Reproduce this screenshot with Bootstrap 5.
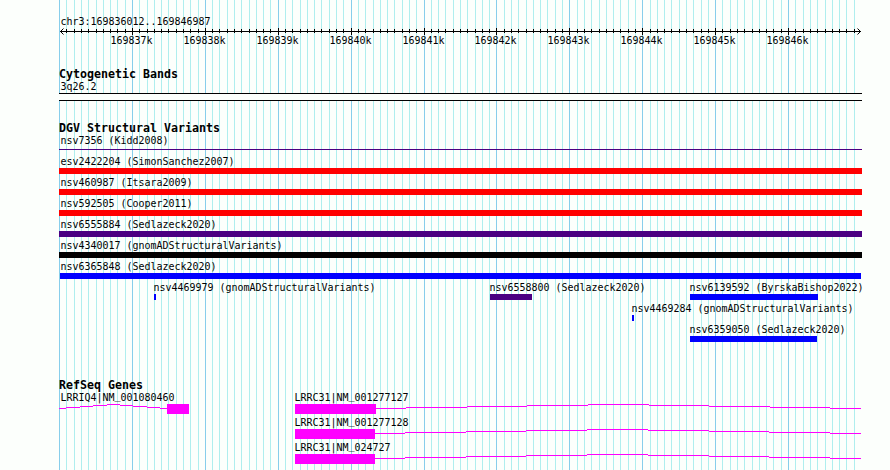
<!DOCTYPE html>
<html lang="en">
<head>
<meta charset="utf-8">
<title>chr3:169836012..169846987</title>
<link href="https://cdn.jsdelivr.net/npm/bootstrap@5.3.0/dist/css/bootstrap.min.css" rel="stylesheet">
<style>
body{background:#fcfffc;color:#000;font-family:"DejaVu Sans Mono","Liberation Mono",monospace}
.browser{width:890px;height:470px;padding:15px 0 0 59px}
.gridlines{z-index:0}
.tracks{z-index:1;width:803px}
.lbl{display:block;width:max-content;height:13px;font-size:11px;line-height:13px;white-space:pre;margin-left:1px;transform:translateX(.5px) scaleX(.906);transform-origin:0 0}
.underscore{vertical-align:2px;line-height:0}
.heading{height:13px;margin:20px 0 0;padding-top:1px;font-size:11.63px;line-height:12px;font-weight:700;white-space:pre}
.heading.genes{margin-top:34px}
.axis{height:6px;overflow:visible}
.scale{height:13px}
.scale .lbl{margin-left:-.5px}
.band{height:8px;background:#fcfffc;border:solid #000;border-width:1px 0}
.variant{height:21px}
.gene{height:25px}
.feature .lbl{margin-left:-1px}
.feature.edge .lbl{margin-left:1px}
.feature.inset .lbl{margin-left:0}
.bar{height:6px}
.bar.thin{height:1px;margin-top:2px}
.c-red{background:#f00}.c-indigo{background:#4b0082}.c-black{background:#000}.c-blue{background:#00f}
.genebar{height:10px;overflow:visible}
</style>
<script src="https://cdn.jsdelivr.net/npm/bootstrap@5.3.0/dist/js/bootstrap.bundle.min.js"></script>
</head>
<body class="m-0 overflow-hidden">
<main class="browser position-relative overflow-hidden">
  <svg class="gridlines position-absolute top-0 start-0" width="890" height="470" shape-rendering="crispEdges" aria-hidden="true"><path id="minor" fill="#afeeee"/><path id="major" fill="#87ceeb"/></svg>
  <div class="tracks position-relative">
    <span class="lbl">chr3:169836012..169846987</span>
    <svg class="axis d-block" width="803" height="6" aria-hidden="true"><path id="ticks" shape-rendering="crispEdges"/><path d="M4.5 .5L1.5 3.5L4.5 6.5M798.5 .5L801.5 3.5L798.5 6.5" fill="none" stroke="#000"/></svg>
    <div class="scale d-flex" id="scale"></div>
    <h2 class="heading">Cytogenetic Bands</h2>
    <span class="lbl">3q26.2</span>
    <div class="band"></div>
    <h2 class="heading">DGV Structural Variants</h2>
    <div id="variants"></div>
    <h2 class="heading genes">RefSeq Genes</h2>
    <div id="genes"></div>
  </div>
</main>
<script>
const LEFT = 59, gridX = k => Math.floor(59.55 + 7.29 * k);
let minor = '', major = '', ticks = 'M1 3H802V4H1Z';
for (let k = 0; k < 110; k++) {
  const x = gridX(k), t = x - LEFT;
  if (k % 10) { minor += `M${x} 0h1v470h-1z`; ticks += `M${t} 1h1v4h-1z`; }
  else { major += `M${x} 0h1v470h-1z`; if (k) ticks += `M${t} 0h1v7h-1z`; }
}
document.getElementById('minor').setAttribute('d', minor);
document.getElementById('major').setAttribute('d', major);
document.getElementById('ticks').setAttribute('d', ticks);

let scale = '';
for (let i = 1; i <= 10; i++) {
  const w = gridX(i * 10 + 10) - gridX(i * 10);
  scale += `<div class="flex-shrink-0" style="width:${i < 10 ? w : 50}px"><span class="lbl">${169836 + i}k</span></div>`;
}
const scaleEl = document.getElementById('scale');
scaleEl.innerHTML = scale;
scaleEl.style.paddingLeft = (gridX(10) - 22 - LEFT) + 'px';

// each row: [label, start, end, colour]
const rows = [
  [['nsv7356 (Kidd2008)', 59, 862, 'indigo thin']],
  [['esv2422204 (SimonSanchez2007)', 59, 862, 'red']],
  [['nsv460987 (Itsara2009)', 59, 862, 'red']],
  [['nsv592505 (Cooper2011)', 59, 862, 'red']],
  [['nsv6555884 (Sedlazeck2020)', 59, 862, 'indigo']],
  [['nsv4340017 (gnomADStructuralVariants)', 59, 862, 'black']],
  [['nsv6365848 (Sedlazeck2020)', 60, 861, 'blue']],
  [['nsv4469979 (gnomADStructuralVariants)', 154, 156, 'blue'], ['nsv6558800 (Sedlazeck2020)', 490, 532, 'indigo'], ['nsv6139592 (ByrskaBishop2022)', 690, 818, 'blue']],
  [['nsv4469284 (gnomADStructuralVariants)', 632, 634, 'blue']],
  [['nsv6359050 (Sedlazeck2020)', 690, 817, 'blue']]
];
document.getElementById('variants').innerHTML = rows.map(row => {
  let at = LEFT;
  return '<div class="variant d-flex">' + row.map(([label, a, b, colour]) => {
    const gap = a - at; at = b;
    const kind = a === 59 ? 'edge' : a === 60 ? 'inset' : '';
    return `<div class="feature flex-shrink-0 ${kind}" style="margin-left:${gap}px;width:${b - a}px"><span class="lbl">${label}</span><div class="bar c-${colour}"></div></div>`;
  }).join('') + '</div>';
}).join('');

// intron steps: [start, end, height above the baseline]
const heights = [0, 1, 2, 3, 4, 3, 2, 1, 0];
const steps = xs => heights.map((h, i) => `M${xs[i] - LEFT} ${4 - h}H${xs[i + 1] - LEFT}v1H${xs[i] - LEFT}z`).join('');
const exon = (a, b) => `M${a - LEFT} 0H${b - LEFT}V10H${a - LEFT}z`;
const first = steps([59, 66, 80, 93, 107, 120, 133, 147, 160, 167]) + exon(167, 189);
const long = [376, 406, 467, 527, 588, 649, 709, 770, 830, 861];
const short = [375, 405, 466, 526, 587, 648, 709, 769, 830, 861];
const genes = [
  [[['LRRIQ4|NM_001080460', 60], ['LRRC31|NM_001277127', 294]], first + exon(295, 376) + steps(long)],
  [[['LRRC31|NM_001277128', 294]], exon(295, 375) + steps(short)],
  [[['LRRC31|NM_024727', 294]], exon(295, 375) + steps(short)]
];
document.getElementById('genes').innerHTML = genes.map(([labels, d]) => {
  let at = LEFT;
  const names = labels.map(([text, x]) => {
    const gap = x - at; at = x;
    return `<div class="flex-shrink-0" style="margin-left:${gap}px;width:0"><span class="lbl ms-0">${text.replace('_', '<span class="underscore">_</span>')}</span></div>`;
  }).join('');
  return `<div class="gene"><div class="d-flex">${names}</div><svg class="genebar d-block" width="803" height="10" shape-rendering="crispEdges"><path fill="#f0f" d="${d}"/></svg></div>`;
}).join('');
</script>
</body>
</html>
